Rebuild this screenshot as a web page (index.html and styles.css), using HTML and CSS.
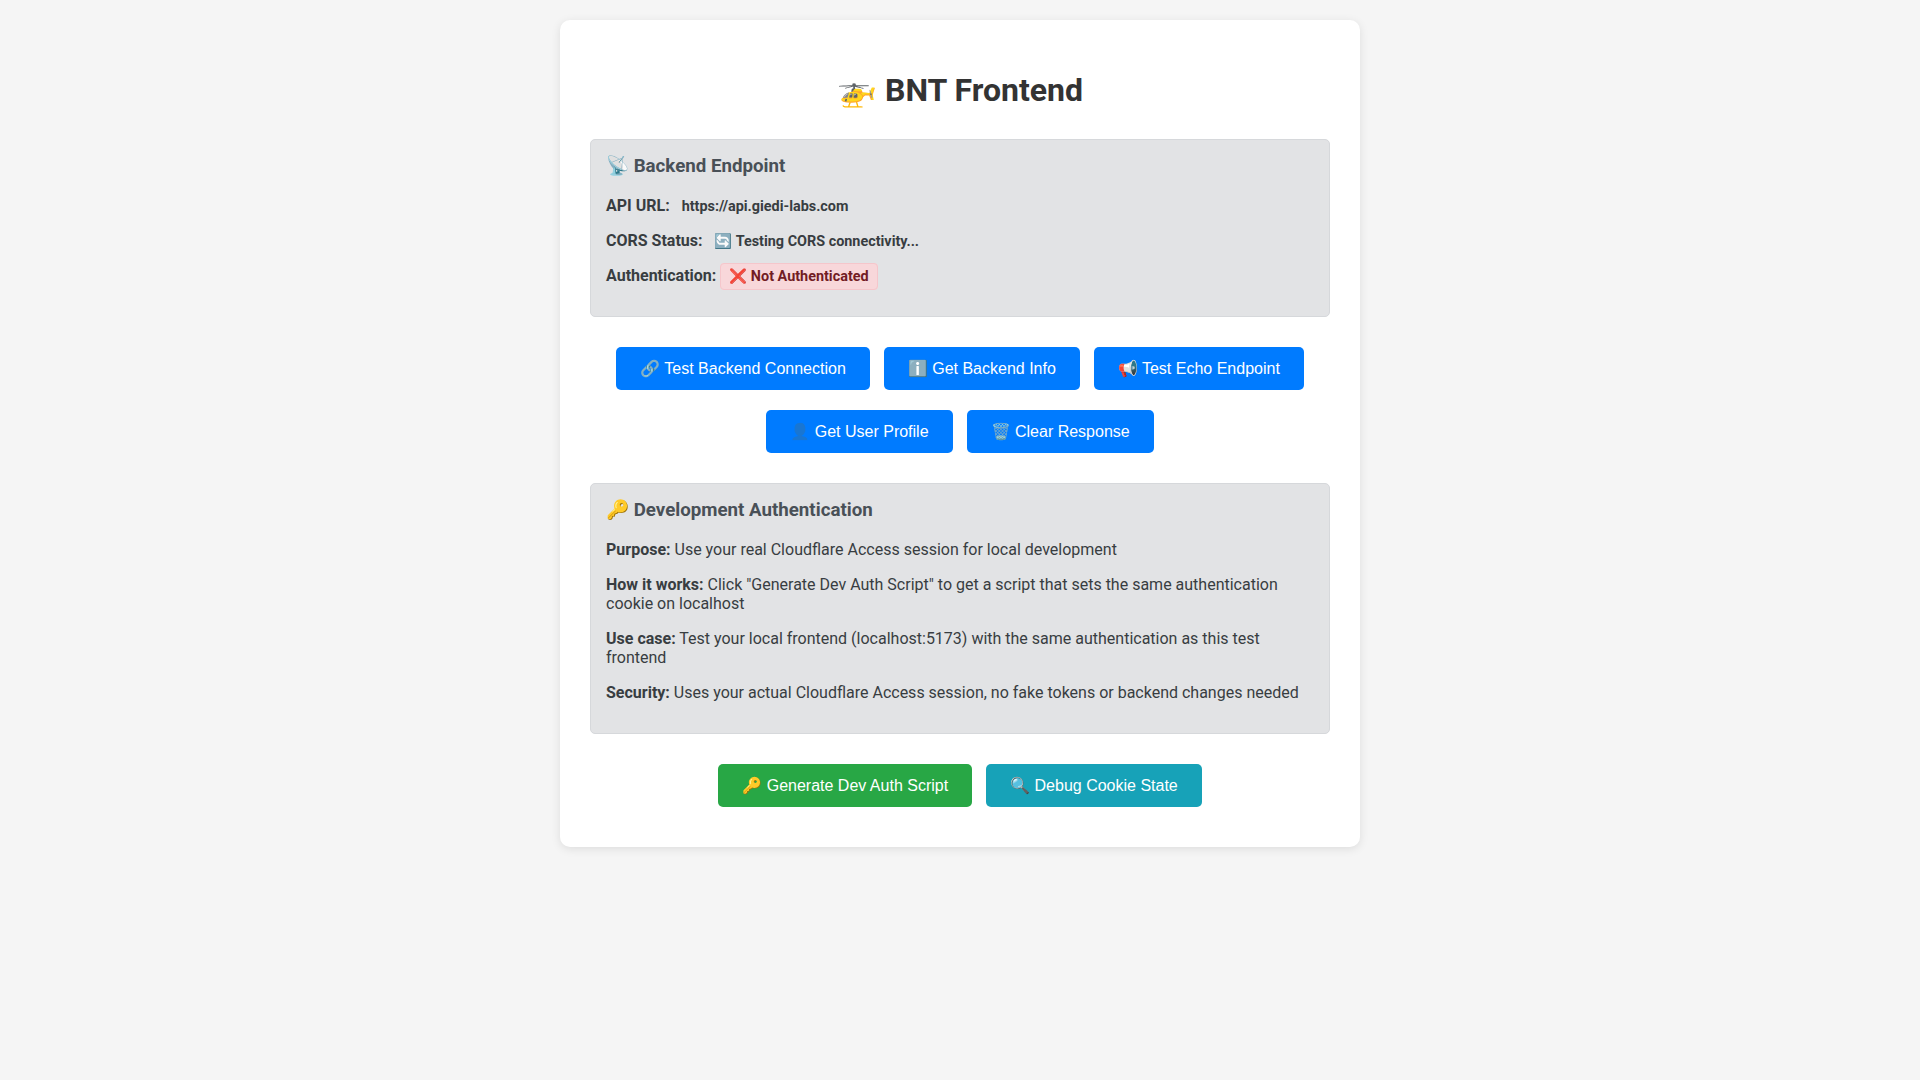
FILE: index.html
```html
<!DOCTYPE html>
<html lang="en">
<head>
    <meta charset="UTF-8">
    <meta name="viewport" content="width=device-width, initial-scale=1.0">
    <title>BNT Frontend</title>
    <link rel="stylesheet" href="styles.css">
</head>
<body>
    <div class="container">
        <h1>🚁 BNT Frontend</h1>

        <div class="info">
            <h3>📡 Backend Endpoint</h3>
            <p><strong>API URL:</strong> <span class="code">https://api.giedi-labs.com</span></p>
            <p><strong>CORS Status:</strong> <span class="code">🔄 Testing CORS connectivity...</span></p>
            <p><strong>Authentication:</strong> <span class="auth-status">❌ Not Authenticated</span></p>
        </div>

        <div class="actions">
            <button class="btn">🔗 Test Backend Connection</button>
            <button class="btn">ℹ️ Get Backend Info</button>
            <button class="btn">📢 Test Echo Endpoint</button>
            <button class="btn">👤 Get User Profile</button>
            <button class="btn">🗑️ Clear Response</button>
        </div>

        <div class="info">
            <h3>🔑 Development Authentication</h3>
            <p><strong>Purpose:</strong> Use your real Cloudflare Access session for local development</p>
            <p><strong>How it works:</strong> Click "Generate Dev Auth Script" to get a script that sets the same authentication cookie on localhost</p>
            <p><strong>Use case:</strong> Test your local frontend (localhost:5173) with the same authentication as this test frontend</p>
            <p><strong>Security:</strong> Uses your actual Cloudflare Access session, no fake tokens or backend changes needed</p>
        </div>

        <div class="actions">
            <button class="btn btn-green">🔑 Generate Dev Auth Script</button>
            <button class="btn btn-teal">🔍 Debug Cookie State</button>
        </div>
    </div>
</body>
</html>
```

FILE: styles.css
```css
body {
    font-family: Roboto, sans-serif;
    margin: 0;
    background-color: #f5f5f5;
    color: #333;
}
.container {
    width: 800px;
    box-sizing: border-box;
    margin: 20px auto;
    padding: 30px;
    background-color: white;
    border-radius: 10px;
    box-shadow: 0 2px 10px rgba(0, 0, 0, 0.1);
}
h1 {
    font-size: 32px;
    text-align: center;
    color: #333;
    margin-bottom: 30px;
}
.info {
    background-color: #e2e3e5;
    border: 1px solid #d6d8db;
    border-radius: 5px;
    padding: 15px;
    margin: 20px 0;
    color: #383d41;
}
.info h3 {
    margin: 0 0 18.72px 0;
    color: #495057;
}
.info p {
    margin: 0 0 16px 0;
}
.code {
    padding: 4px 8px;
    font-size: 0.9em;
    font-weight: bold;
}
.auth-status {
    padding: 4px 8px;
    font-size: 0.9em;
    font-weight: bold;
    color: #721c24;
    background-color: #f8d7da;
    border: 1px solid #f5c6cb;
    border-radius: 4px;
}
.actions {
    text-align: center;
}
.btn {
    font-family: "Liberation Sans", sans-serif;
    font-size: 16px;
    color: white;
    background-color: #007bff;
    border: none;
    border-radius: 5px;
    padding: 12px 24px;
    margin: 10px 5px;
    cursor: pointer;
}
.btn-green {
    background-color: #28a745;
}
.btn-teal {
    background-color: #17a2b8;
}
```
